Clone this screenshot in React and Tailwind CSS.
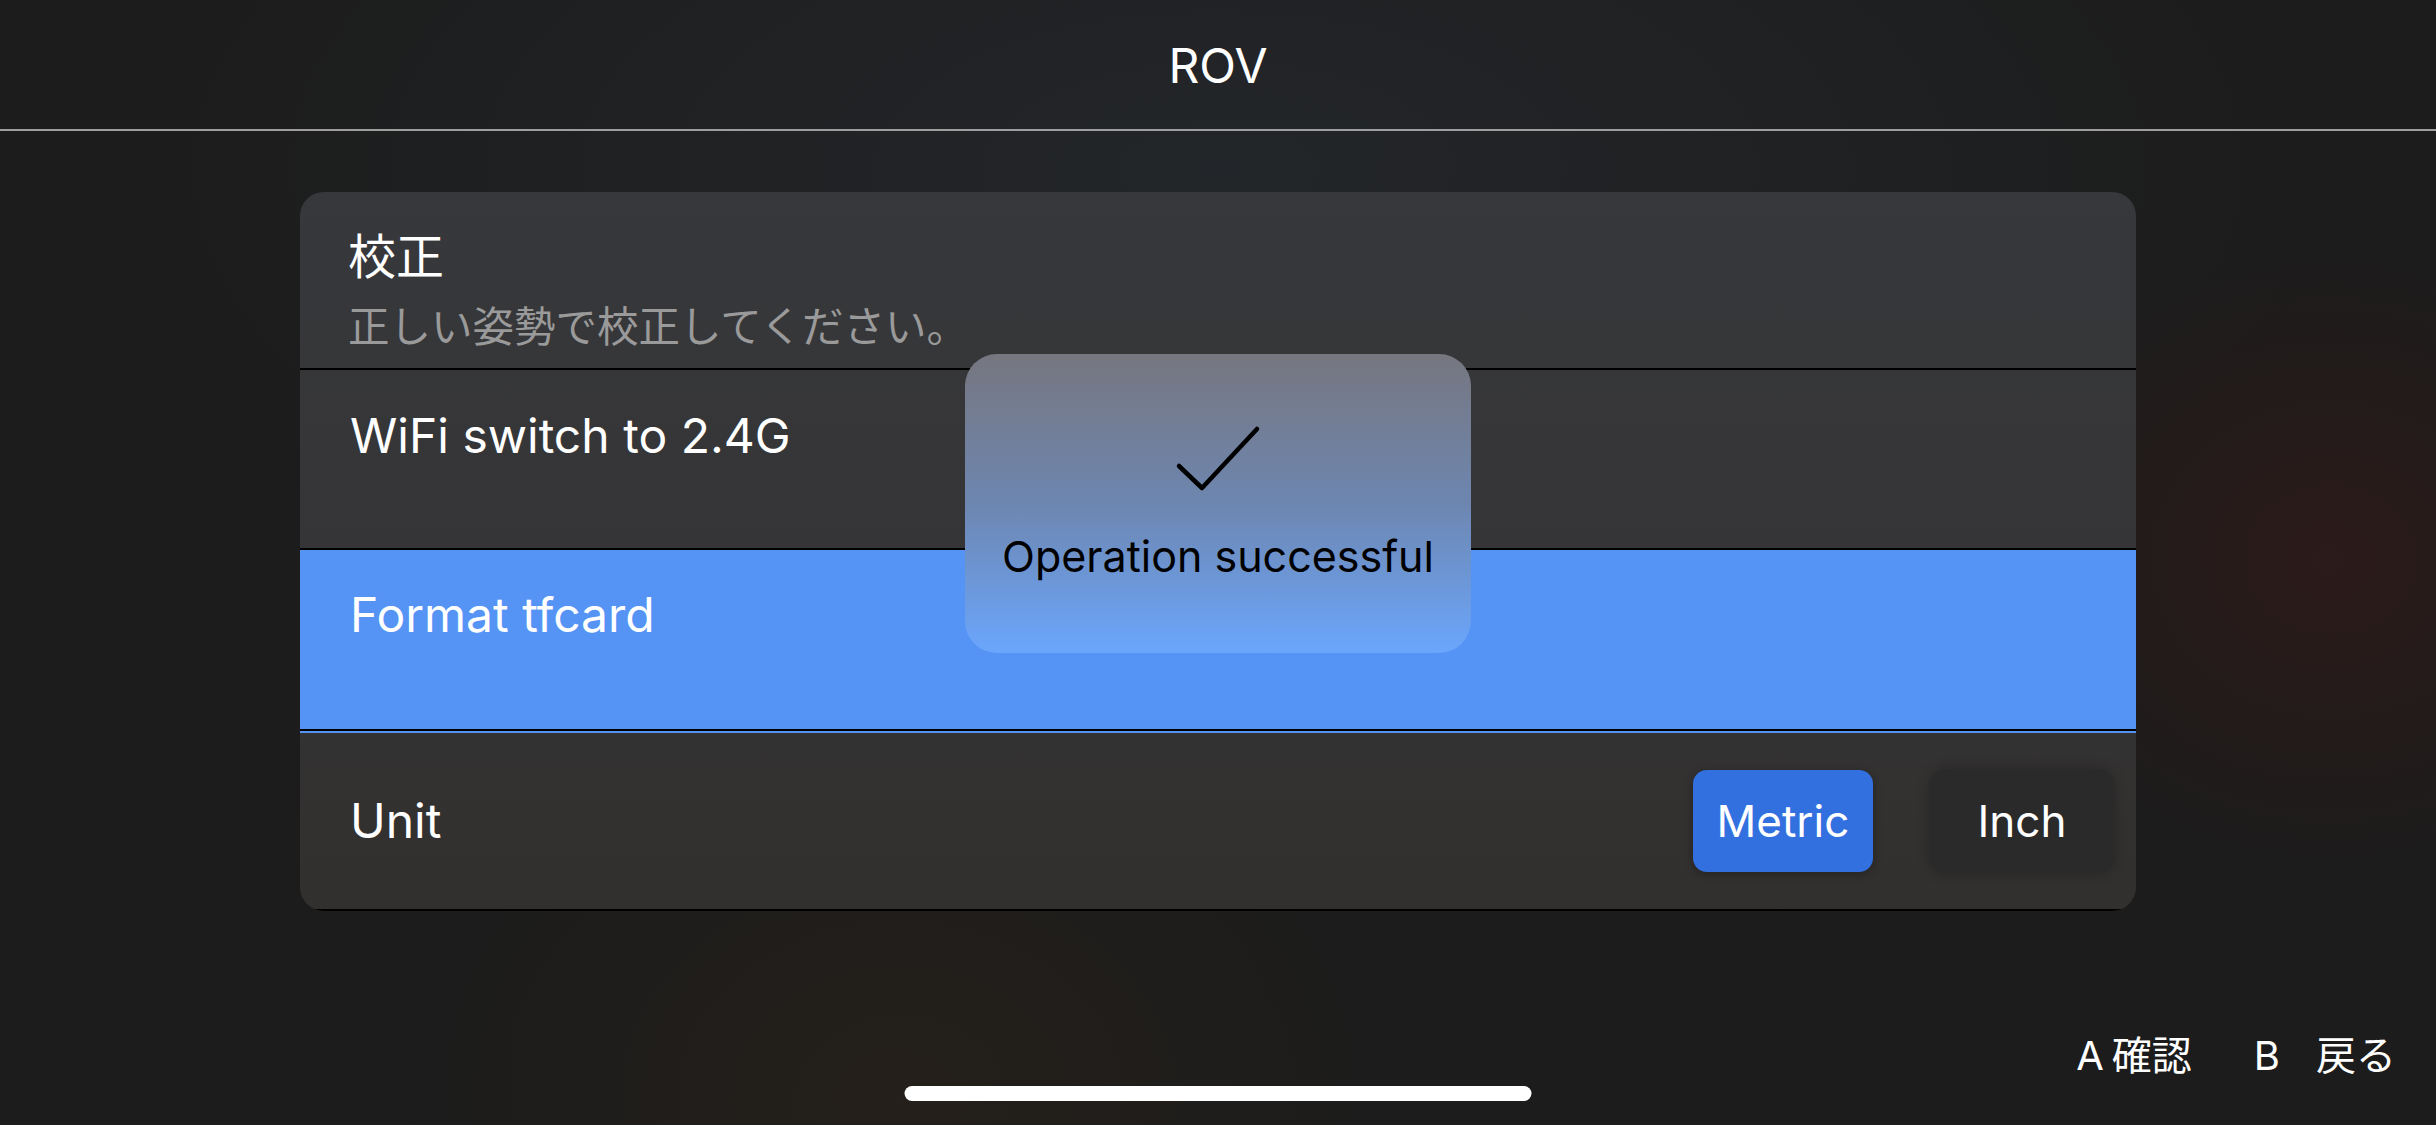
import React from 'react';

const font = { fontFamily: '"Inter", "Noto Sans CJK JP", sans-serif' };

function CheckIcon() {
  return (
    <svg width="88" height="70" viewBox="0 0 88 70" fill="none">
      <path d="M5 42 L28 64 L83 5" stroke="#000" strokeWidth="4.5" strokeLinecap="round" strokeLinejoin="round" />
    </svg>
  );
}

export default function App() {
  return (
    <div
      style={font}
      className="relative w-[2436px] h-[1125px] overflow-hidden flex flex-col text-white bg-[#1c1c1c] [background-image:radial-gradient(ellipse_360px_320px_at_2330px_560px,rgba(48,26,24,0.75),transparent),radial-gradient(ellipse_1100px_500px_at_50%_15%,rgba(36,39,43,0.9),transparent),radial-gradient(ellipse_500px_400px_at_900px_1100px,rgba(38,32,26,0.8),transparent)]"
    >
      {/* header */}
      <div className="h-[129px] flex items-center justify-center">
        <span className="text-[48px] leading-none pt-[2px]">ROV</span>
      </div>
      <div className="h-[2px] bg-[#9e9e9e]" />

      {/* settings list */}
      <div className="relative mt-[61px] mx-auto w-[1836px]">
        <div className="rounded-[24px] overflow-hidden bg-gradient-to-b from-[#37383b] via-[#353537] to-[#32302e]">
          <div className="h-[178px] border-b-2 border-black pl-[48px] pt-[41px]">
            <div className="text-[48px] leading-none">校正</div>
            <div className="mt-[26px] text-[41.5px] leading-none text-[#9a9a9a]">正しい姿勢で校正してください。</div>
          </div>
          <div className="h-[180px] border-b-2 border-black pl-[50px] pt-[42px]">
            <div className="text-[48px] leading-none">WiFi switch to 2.4G</div>
          </div>
          <div className="h-[181px] border-b-2 border-black bg-[#5594f5] pl-[50px] pt-[41px]">
            <div className="text-[48px] leading-none">Format tfcard</div>
          </div>
          <div className="h-[2px] bg-[#5594f5]" />
          <div className="h-[178px] border-b-2 border-black flex items-center pl-[50px] pr-[22px]">
            <div className="text-[48px] leading-none flex-1">Unit</div>
            <button className="w-[180px] h-[102px] rounded-[14px] bg-[#3370df] text-[44px] leading-none text-white shadow-[0_2px_10px_rgba(0,0,0,0.3)]">
              Metric
            </button>
            <button className="ml-[57px] w-[184px] h-[104px] rounded-[16px] bg-[#2a2a2a] text-[44px] leading-none text-white shadow-[0_0_14px_rgba(0,0,0,0.25)]">
              Inch
            </button>
          </div>
        </div>

        {/* toast */}
        <div className="absolute top-[162px] left-1/2 -translate-x-1/2 w-[506px] h-[299px] rounded-[32px] bg-gradient-to-b from-[#76767f] via-[#6d86b0] to-[#6aa6fd] flex flex-col items-center pt-[70px]">
          <CheckIcon />
          <div className="mt-[41px] text-[43px] leading-none text-black">Operation successful</div>
        </div>
      </div>

      {/* button hints */}
      <div className="flex-1 flex items-end justify-end pr-[40px] pb-[49px]">
        <div className="flex items-center text-[40px] leading-none">
          <span>A</span>
          <span className="ml-[8px]">確認</span>
          <span className="ml-[62px]">B</span>
          <span className="ml-[36px]">戻る</span>
        </div>
      </div>

      {/* home indicator */}
      <div className="absolute bottom-[24px] left-1/2 -translate-x-1/2 w-[627px] h-[15px] rounded-full bg-white" />
    </div>
  );
}
